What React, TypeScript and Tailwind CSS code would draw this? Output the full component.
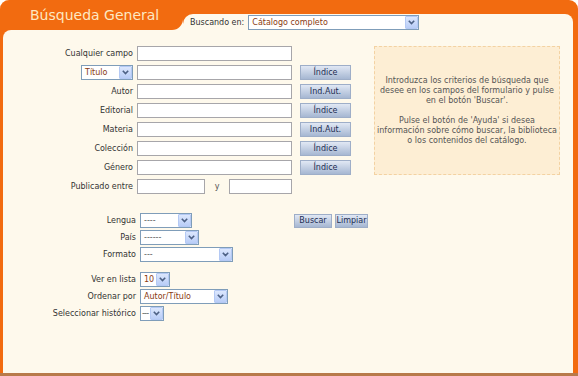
import React from 'react';

interface Row {
  label?: string;
  select?: string;
  btn?: string;
}

const topRows: Row[] = [
  { label: 'Cualquier campo' },
  { select: 'Título', btn: 'Índice' },
  { label: 'Autor', btn: 'Ind.Aut.' },
  { label: 'Editorial', btn: 'Índice' },
  { label: 'Materia', btn: 'Ind.Aut.' },
  { label: 'Colección', btn: 'Índice' },
  { label: 'Género', btn: 'Índice' }
];

function Arrow() {
  return (
    <div className="flex h-[13px] w-[13px] shrink-0 items-center justify-center rounded-[1px] border border-[#b4c9f4] bg-gradient-to-b from-[#dce7fd] to-[#b9cdf7]">
      <svg width="7" height="5" viewBox="0 0 7 5">
        <polyline points="0.8,0.8 3.5,3.6 6.2,0.8" fill="none" stroke="#4d6185" strokeWidth="1.6" />
      </svg>
    </div>
  );
}

function Select({
  value,
  className,
  brown,
  tight
}: {
  value: string;
  className: string;
  brown?: boolean;
  tight?: boolean;
}) {
  return (
    <div className={`flex h-[15px] items-center overflow-hidden border border-[#7f9db9] bg-white ${className}`}>
      <span
        className={`min-w-0 flex-1 whitespace-nowrap leading-[13px] ${tight ? 'pl-[1px] tracking-[-0.8px]' : 'pl-[3px]'} ${
          brown ? 'text-[#8a3b12]' : 'text-[#555]'
        }`}
      >
        {value}
      </span>
      <Arrow />
    </div>
  );
}

function Field({ className }: { className: string }) {
  return <div className={`h-[15px] border border-[#a7a6aa] bg-white ${className}`}></div>;
}

function Btn({ label, className }: { label: string; className: string }) {
  return (
    <div
      className={`flex items-center justify-center border border-[#9eaec8] bg-gradient-to-b from-[#e1e8f4] to-[#a6b7d2] leading-none text-[#1d2d52] ${className}`}
    >
      {label}
    </div>
  );
}

export default function App() {
  return (
    <div className="h-[376px] w-[578px] bg-white font-['DejaVu_Sans',sans-serif] text-[8px]">
      <div className="flex h-[376px] w-[578px] flex-col overflow-hidden rounded-t-[9px] border-b-[3px] border-[#b87a4a] bg-[#f26b10]">
        {/* header */}
        <div className="flex h-[30px]">
          <div className="h-[30px] w-[183px] bg-[#fef9ec]">
            <div className="flex h-full items-center rounded-br-[11px] bg-[#f26b10] pl-[30px] text-[14px] text-[#fde8c2]">
              Búsqueda General
            </div>
          </div>
          <div className="flex-1 pt-[14px] pr-[5px]">
            <div className="flex h-[16px] items-start rounded-tl-[10px] rounded-tr-[8px] bg-[#fef9ec] pt-[1px] pl-[7px]">
              <span className="mt-[2px] text-[#333]">Buscando en:</span>
              <Select value="Cátalogo completo" className="ml-[4px] h-[14px] w-[171px]" brown />
            </div>
          </div>
        </div>

        {/* body */}
        <div className="ml-[3px] mr-[5px] flex flex-1 flex-col rounded-tl-[8px] bg-[#fef9ec] pt-[16px] text-[#333]">
          <div className="flex items-start">
            <div className="flex w-[371px] flex-col gap-[4px]">
              {topRows.map((row, i) => (
                <div key={i} className="flex h-[15px] items-center">
                  <div className="flex w-[130px] justify-end">
                    {row.select ? <Select value={row.select} className="w-[52px]" brown /> : <span>{row.label}</span>}
                  </div>
                  <Field className="ml-[4px] w-[155px]" />
                  {row.btn && <Btn label={row.btn} className="ml-[8px] h-[15px] w-[51px]" />}
                </div>
              ))}
              <div className="flex h-[15px] items-center">
                <div className="flex w-[130px] justify-end">
                  <span>Publicado entre</span>
                </div>
                <Field className="ml-[4px] w-[68px]" />
                <span className="w-[24px] text-center text-[#555]">y</span>
                <Field className="w-[63px]" />
              </div>
            </div>
            <div className="flex h-[129px] w-[186px] flex-col items-center justify-center border border-dashed border-[#f3d2a2] bg-[#fdeed4] text-center leading-[10px] text-[#555]">
              <p>Introduzca los criterios de búsqueda que</p>
              <p>desee en los campos del formulario y pulse</p>
              <p>en el botón 'Buscar'.</p>
              <p className="mt-[10px]">Pulse el botón de 'Ayuda' si desea</p>
              <p className="whitespace-nowrap">información sobre cómo buscar, la biblioteca</p>
              <p>o los contenidos del catálogo.</p>
            </div>
          </div>

          <div className="mt-[19px] flex flex-col gap-[2px]">
            <div className="flex h-[15px] items-center">
              <span className="w-[133px] text-right">Lengua</span>
              <Select value="----" className="ml-[4px] w-[52px]" />
              <Btn label="Buscar" className="ml-[102px] h-[14px] w-[38px]" />
              <Btn label="Limpiar" className="ml-[3px] h-[14px] w-[33px]" />
            </div>
            <div className="flex h-[15px] items-center">
              <span className="w-[133px] text-right">País</span>
              <Select value="------" className="ml-[4px] w-[59px]" />
            </div>
            <div className="flex h-[15px] items-center">
              <span className="w-[133px] text-right">Formato</span>
              <Select value="---" className="ml-[4px] w-[93px]" />
            </div>
          </div>

          <div className="mt-[10px] flex flex-col gap-[2px]">
            <div className="flex h-[15px] items-center">
              <span className="w-[133px] text-right">Ver en lista</span>
              <Select value="10" className="ml-[4px] w-[30px]" brown />
            </div>
            <div className="flex h-[15px] items-center">
              <span className="w-[133px] text-right">Ordenar por</span>
              <Select value="Autor/Título" className="ml-[4px] w-[88px]" brown />
            </div>
            <div className="flex h-[15px] items-center">
              <span className="w-[133px] text-right">Seleccionar histórico</span>
              <Select value="---" className="ml-[4px] w-[24px]" tight />
            </div>
          </div>
        </div>
      </div>
    </div>
  );
}
